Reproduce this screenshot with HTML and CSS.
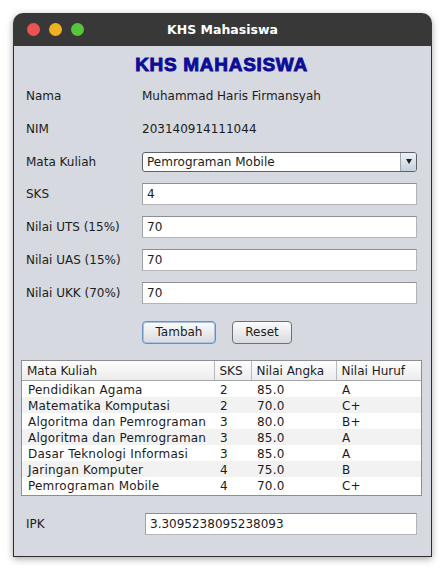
FILE: index.html
```html
<!DOCTYPE html>
<html lang="id">
<head>
<meta charset="utf-8">
<title>KHS Mahasiswa</title>
<link rel="stylesheet" href="styles.css">
</head>
<body>
<div class="window">
  <div class="titlebar">
    <div class="lights">
      <span class="light red"></span>
      <span class="light yellow"></span>
      <span class="light green"></span>
    </div>
    <div class="title">KHS Mahasiswa</div>
    <div></div>
  </div>
  <div class="content">
    <h1 class="heading">KHS MAHASISWA</h1>
    <div class="form">
      <div class="label">Nama</div>
      <div class="value">Muhammad Haris Firmansyah</div>
      <div class="label">NIM</div>
      <div class="value">203140914111044</div>
      <div class="label">Mata Kuliah</div>
      <div class="combo"><span class="combo-text">Pemrograman Mobile</span><span class="combo-btn"><span class="arrow"></span></span></div>
      <div class="label">SKS</div>
      <div class="field">4</div>
      <div class="label">Nilai UTS (15%)</div>
      <div class="field">70</div>
      <div class="label">Nilai UAS (15%)</div>
      <div class="field">70</div>
      <div class="label">Nilai UKK (70%)</div>
      <div class="field">70</div>
    </div>
    <div class="buttons">
      <button class="btn btn-focus">Tambah</button>
      <button class="btn btn-reset">Reset</button>
    </div>
    <div class="table-wrap">
      <table class="grid">
        <colgroup>
          <col class="c1"><col class="c2"><col class="c3"><col class="c4">
        </colgroup>
        <thead>
          <tr><th>Mata Kuliah</th><th>SKS</th><th>Nilai Angka</th><th>Nilai Huruf</th></tr>
        </thead>
        <tbody>
          <tr><td>Pendidikan Agama</td><td>2</td><td>85.0</td><td>A</td></tr>
          <tr><td>Matematika Komputasi</td><td>2</td><td>70.0</td><td>C+</td></tr>
          <tr><td>Algoritma dan Pemrograman</td><td>3</td><td>80.0</td><td>B+</td></tr>
          <tr><td>Algoritma dan Pemrograman</td><td>3</td><td>85.0</td><td>A</td></tr>
          <tr><td>Dasar Teknologi Informasi</td><td>3</td><td>85.0</td><td>A</td></tr>
          <tr><td>Jaringan Komputer</td><td>4</td><td>75.0</td><td>B</td></tr>
          <tr><td>Pemrograman Mobile</td><td>4</td><td>70.0</td><td>C+</td></tr>
        </tbody>
      </table>
    </div>
    <div class="ipk">
      <div class="label">IPK</div>
      <div class="field">3.3095238095238093</div>
    </div>
  </div>
</div>
</body>
</html>
```

FILE: styles.css
```css
* { box-sizing: border-box; }
html, body { margin: 0; }
body {
  background: #ffffff;
  padding: 13px;
  font-family: "DejaVu Sans", sans-serif;
  font-size: 12px;
  color: #1c1c1c;
}
.window {
  width: 419px;
  border-radius: 10px 10px 0 0;
  box-shadow: 0 2px 7px rgba(0,0,0,0.35);
}
.titlebar {
  height: 33px;
  background: #383838;
  border-radius: 10px 10px 0 0;
  display: grid;
  grid-template-columns: 1fr auto 1fr;
  align-items: center;
}
.lights {
  display: flex;
  gap: 9px;
  padding-left: 14px;
}
.light {
  width: 13px;
  height: 13px;
  border-radius: 50%;
}
.red { background: #ec5252; }
.yellow { background: #f1b022; }
.green { background: #57c53b; }
.title {
  color: #ffffff;
  font-weight: bold;
  font-size: 12.5px;
}
.content {
  background: #d6d9df;
  border: 1px solid #2e2e2e;
  border-top: none;
  padding: 8px 9px 21px 7px;
}
.heading {
  margin: 0;
  height: 22px;
  line-height: 22px;
  text-align: center;
  font-family: "Liberation Sans", Arial, sans-serif;
  font-size: 19px;
  font-weight: bold;
  letter-spacing: 0.7px;
  color: #0c0c96;
  -webkit-text-stroke: 0.9px #0c0c96;
}
.form {
  margin-top: 9px;
  padding: 0 5px;
  display: grid;
  grid-template-columns: 116px 1fr;
  grid-auto-rows: 22px;
  row-gap: 10.8px;
  align-items: center;
}
.label, .value { white-space: nowrap; }
.field {
  height: 22px;
  background: #ffffff;
  border: 1px solid #b4b4b6;
  border-top-color: #8e8f92;
  border-left-color: #a2a3a6;
  padding-left: 4px;
  line-height: 20px;
}
.combo {
  height: 20px;
  background: #ffffff;
  border: 1px solid #5f6166;
  border-radius: 3px;
  display: flex;
  overflow: hidden;
}
.combo-text {
  flex: 1;
  padding-left: 4px;
  line-height: 18px;
}
.combo-btn {
  width: 16px;
  background: linear-gradient(#eef2f7, #c5d0dc);
  border-left: 1px solid #9aa6b4;
  display: flex;
  align-items: center;
  justify-content: center;
}
.arrow {
  width: 0;
  height: 0;
  border-left: 3.5px solid transparent;
  border-right: 3.5px solid transparent;
  border-top: 5px solid #1e1e1e;
}
.buttons {
  margin-top: 17px;
  padding-left: 121px;
  display: flex;
  gap: 16px;
}
.btn {
  height: 23px;
  margin: 0;
  padding: 0;
  font-family: "DejaVu Sans", sans-serif;
  font-size: 12px;
  color: #1c1c1c;
  background: linear-gradient(#fbfbfc, #e6e8eb 60%, #d8dadd);
  border: 1px solid #6e7075;
  border-radius: 4px;
}
.btn-focus {
  width: 74px;
  border-color: #6d8fbd;
  box-shadow: inset 0 0 0 1px #a9c2e2;
}
.btn-reset { width: 60px; }
.table-wrap {
  margin-top: 16px;
  height: 136px;
  background: #ffffff;
  border: 1px solid #8d8e92;
}
.grid {
  width: 100%;
  table-layout: fixed;
  border-collapse: collapse;
}
.c1 { width: 192px; }
.c2 { width: 37px; }
.c3 { width: 85px; }
.c4 { width: 85px; }
.grid th {
  height: 20px;
  padding: 0 0 0 5px;
  text-align: left;
  font-weight: normal;
  background: linear-gradient(#fdfdfd, #ececee);
  border-right: 1px solid #b8b9bc;
  border-bottom: 1px solid #a5a6a9;
  white-space: nowrap;
  overflow: hidden;
}
.grid th:last-child { border-right: none; }
.grid td {
  height: 16px;
  padding: 2px 0 0 6px;
  line-height: 14px;
  letter-spacing: 0.2px;
  white-space: nowrap;
  overflow: hidden;
}
.grid tbody tr:nth-child(even) td { background: #f2f2f2; }
.ipk {
  margin-top: 17px;
  padding: 0 5px;
  display: grid;
  grid-template-columns: 119px 1fr;
  align-items: center;
}
```
